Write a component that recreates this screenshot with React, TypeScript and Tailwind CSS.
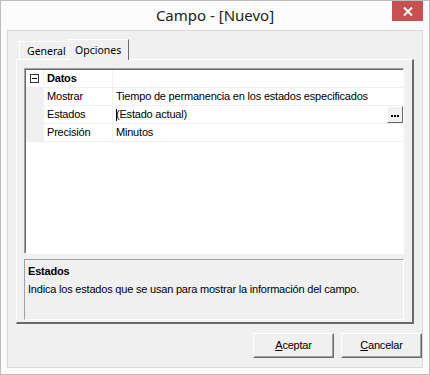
const ui = { fontFamily: '"Liberation Sans", Arial, sans-serif' };
const seg = { fontFamily: '"Noto Sans", "Open Sans", sans-serif' };

type Row = { label: string; value: string; button?: boolean; caret?: boolean };

const rows: Row[] = [
  { label: 'Mostrar', value: 'Tiempo de permanencia en los estados especificados' },
  { label: 'Estados', value: '(Estado actual)', button: true, caret: true },
  { label: 'Precisión', value: 'Minutos' },
];

function Button({ first, rest }: { first: string; rest: string }) {
  return (
    <div className="w-[81px] h-[25px] border border-t-white border-l-white border-r-[#696969] border-b-[#696969] bg-[#f0f0f0]">
      <div className="flex h-full items-center justify-center border border-t-[#f0f0f0] border-l-[#f0f0f0] border-r-[#a0a0a0] border-b-[#a0a0a0] text-[11px] tracking-[-0.2px] text-black">
        <span className="underline">{first}</span>
        {rest}
      </div>
    </div>
  );
}

export default function App() {
  return (
    <div
      className="relative flex h-[375px] w-[430px] flex-col border border-[#bdbdbd] bg-[#fbfbfb]"
      style={ui}
    >
      <div className="flex h-[29px] items-center justify-center pb-[1px] text-[15px] text-[#222]" style={seg}>
        Campo - [Nuevo]
      </div>
      <div className="absolute right-[6px] top-0 flex h-[20px] w-[31px] items-center justify-center bg-[#c75050]">
        <svg width="10" height="9" viewBox="0 0 10 9">
          <path d="M1 0.5 L9 8.5 M9 0.5 L1 8.5" stroke="white" strokeWidth="2" />
        </svg>
      </div>

      <div className="ml-[6px] flex h-[338px] w-[416px] flex-col border border-[#d9d9d9] bg-[#f0f0f0] pl-[8px] pt-[8px]">
        {/* tabs */}
        <div className="flex h-[20px] items-end pl-[3px]" style={seg}>
          <div className="flex h-[18px] w-[49px] items-center border-l border-t border-white pl-[7px] pt-[3px] text-[10.5px] text-black">
            General
          </div>
          <div className="relative z-10 -mb-[1px] flex h-[21px] w-[61px] items-center border-l border-t border-r border-white border-r-[#696969] bg-[#f0f0f0] pl-[6px] pt-[2px] text-[10.5px] text-black">
            Opciones
          </div>
        </div>

        {/* tab page */}
        <div className="flex h-[265px] w-[398px] flex-col border-l border-t border-white border-b-2 border-r-2 border-b-[#696969] border-r-[#696969] pl-[7px] pt-[8px]">
          <div className="h-[186px] w-[380px] border-l border-t border-[#a0a0a0] border-r border-b border-r-white border-b-white">
            <div className="h-full border-l border-t border-[#696969] bg-white text-[11px] tracking-[-0.2px] text-black">
              <div className="flex h-[18px] border-b border-[#f0f0f0]">
                <div className="flex w-[18px] items-center justify-center border-r border-[#f0f0f0]">
                  <div className="flex h-[9px] w-[9px] items-center justify-center border border-[#333]">
                    <div className="h-[1px] w-[5px] bg-black" />
                  </div>
                </div>
                <div className="flex w-[69px] items-center border-r border-[#f0f0f0] pl-[3px] font-bold">Datos</div>
                <div className="flex-1" />
              </div>
              {rows.map((r) => (
                <div key={r.label} className="flex h-[18px] border-b border-[#f0f0f0]">
                  <div className="w-[18px] border-r border-[#f0f0f0] bg-[#f0f0f0]" />
                  <div className="flex w-[69px] items-center border-r border-[#f0f0f0] pl-[3px]">{r.label}</div>
                  <div className="relative flex flex-1 items-center pl-[3px]">
                    {r.caret && <div className="absolute left-[3px] top-[3px] h-[12px] w-[1px] bg-black" />}
                    {r.value}
                    {r.button && (
                      <div className="absolute right-0 top-0 h-[17px] w-[16px] border border-t-white border-l-white border-r-[#696969] border-b-[#696969] bg-[#f0f0f0]">
                        <div className="flex h-full items-center justify-center gap-[1px] pt-[3px]">
                          <div className="h-[2px] w-[2px] bg-black" />
                          <div className="h-[2px] w-[2px] bg-black" />
                          <div className="h-[2px] w-[2px] bg-black" />
                        </div>
                      </div>
                    )}
                  </div>
                </div>
              ))}
            </div>
          </div>

          <div className="mt-[5px] flex h-[61px] w-[380px] flex-col border-l border-t border-[#a0a0a0] border-r border-b border-r-white border-b-white bg-[#f0f0f0] pl-[3px] pt-[3px] text-[11px] tracking-[-0.2px] text-black">
            <div className="font-bold">Estados</div>
            <div className="mt-[1px]">Indica los estados que se usan para mostrar la información del campo.</div>
          </div>
        </div>

        {/* buttons */}
        <div className="mt-[9px] flex gap-[7px] pl-[237px]">
          <Button first="A" rest="ceptar" />
          <Button first="C" rest="ancelar" />
        </div>
      </div>
    </div>
  );
}
